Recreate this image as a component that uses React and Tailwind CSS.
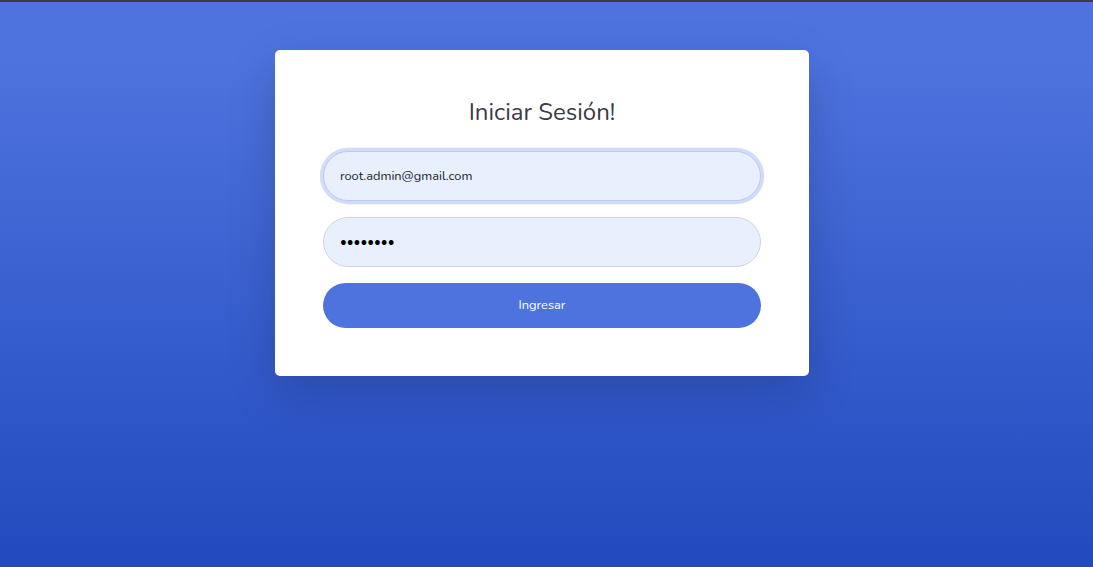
export default function App() {
  const font = { fontFamily: '"Nunito", "Lato", "Noto Sans", sans-serif' };
  return (
    <div className="min-h-screen flex flex-col" style={font}>
      <div className="h-[2px] bg-[#3a3b45]" />
      <div className="flex-1 bg-[linear-gradient(180deg,#4e73df_10%,#224abe_100%)] flex justify-center pr-[9px]">
        <div className="mt-[48px] mb-auto w-[534px] bg-white rounded-[5px] shadow-[0_1rem_3rem_rgba(0,0,0,0.175)] p-[48px] flex flex-col">
          <h1 className="text-center text-[24px] leading-[28.8px] font-normal text-[#3a3b45] mb-[24px]">
            Iniciar Sesión!
          </h1>
          <input
            type="email"
            readOnly
            value="root.admin@gmail.com"
            className="h-[50px] w-full rounded-full bg-[#e8f0fe] border border-[#bac8f3] px-[16px] text-[12.8px] text-[#212529] outline-none shadow-[0_0_0_0.2rem_rgba(78,115,223,0.25)]"
            style={font}
          />
          <input
            type="password"
            readOnly
            value="12345678"
            className="mt-[16px] h-[50px] w-full rounded-full bg-[#e8f0fe] border border-[#d1d3e2] px-[16px] text-[13px] text-black outline-none"
            style={font}
          />
          <button className="mt-[16px] h-[45px] w-full rounded-full bg-[#4e73df] text-white text-[12.8px]">
            Ingresar
          </button>
        </div>
      </div>
    </div>
  );
}
